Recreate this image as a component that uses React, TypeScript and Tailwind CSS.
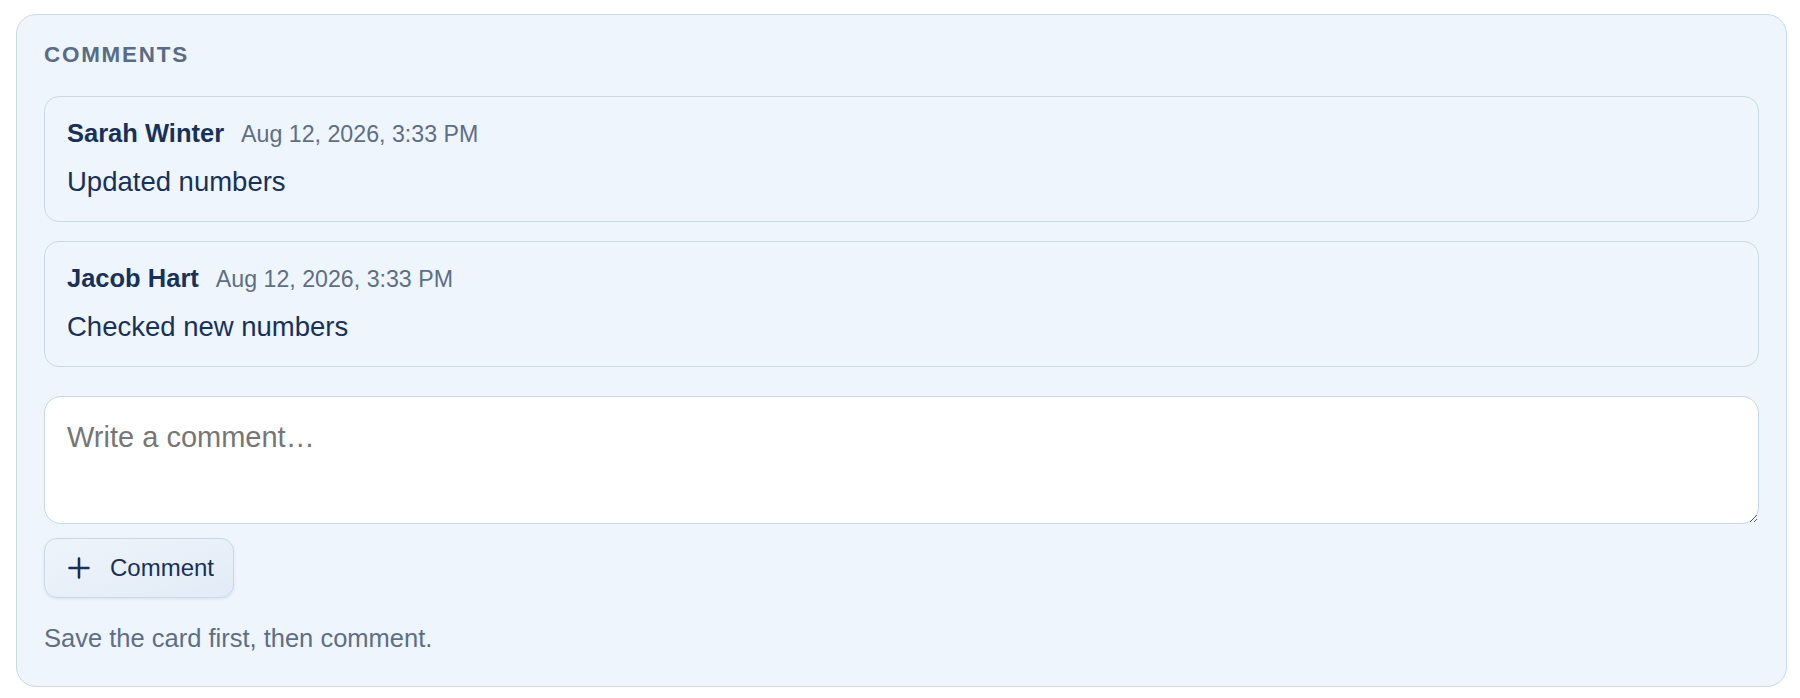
import React from "react";

const comments = [
  { name: "Sarah Winter", date: "Aug 12, 2026, 3:33 PM", body: "Updated numbers" },
  { name: "Jacob Hart", date: "Aug 12, 2026, 3:33 PM", body: "Checked new numbers" },
];

export default function App() {
  return (
    <div className="min-h-[698px] bg-white pt-[14px] pl-[16px] font-['Liberation_Sans',Arial,sans-serif]">
      <div className="w-[1771px] rounded-[20px] border border-[#c9d9ea] bg-[#eff5fc] px-[27px] pt-[27px] pb-[30px]">
        <div className="text-[22.4px] leading-[26px] font-bold tracking-[0.08em] text-[#586b87]">
          COMMENTS
        </div>
        <div className="mt-[28px] flex flex-col gap-[19px]">
          {comments.map((c) => (
            <div
              key={c.name}
              className="rounded-[15px] border border-[#c9d9ea] bg-[#eff5fc] px-[22px] pt-[19px] pb-[19px]"
            >
              <div className="flex items-baseline gap-[17px] h-[34px] leading-[34px]">
                <span className="text-[25.5px] font-bold text-[#17315a]">{c.name}</span>
                <span className="text-[23.2px] text-[#5d6e87]">{c.date}</span>
              </div>
              <div className="mt-[12px] text-[27.5px] leading-[40px] text-[#17315a]">{c.body}</div>
            </div>
          ))}
        </div>
        <textarea
          placeholder="Write a comment…"
          className="mt-[29px] block h-[128px] w-full rounded-[17px] border border-[#c6d7ea] bg-white px-[22px] py-[22px] text-[29px] leading-[36px] text-[#17315a] outline-none placeholder:text-[#767676]"
        />
        <button
          type="button"
          className="mt-[14px] flex h-[60px] items-center gap-[20px] rounded-[13px] border border-[#c9d9ea] bg-gradient-to-br from-[#eef4fb] to-[#e2ebf6] pl-[23px] pr-[19px] shadow-[0_1px_3px_rgba(20,50,90,0.10)]"
        >
          <svg width="22" height="22" viewBox="0 0 22 22" fill="none" stroke="#17315a" strokeWidth="2.6" strokeLinecap="round">
            <path d="M11 1.5v19M1.5 11h19" />
          </svg>
          <span className="text-[24px] text-[#17315a]">Comment</span>
        </button>
        <div className="mt-[22px] text-[25.5px] leading-[36px] text-[#5d6e87]">
          Save the card first, then comment.
        </div>
      </div>
    </div>
  );
}
